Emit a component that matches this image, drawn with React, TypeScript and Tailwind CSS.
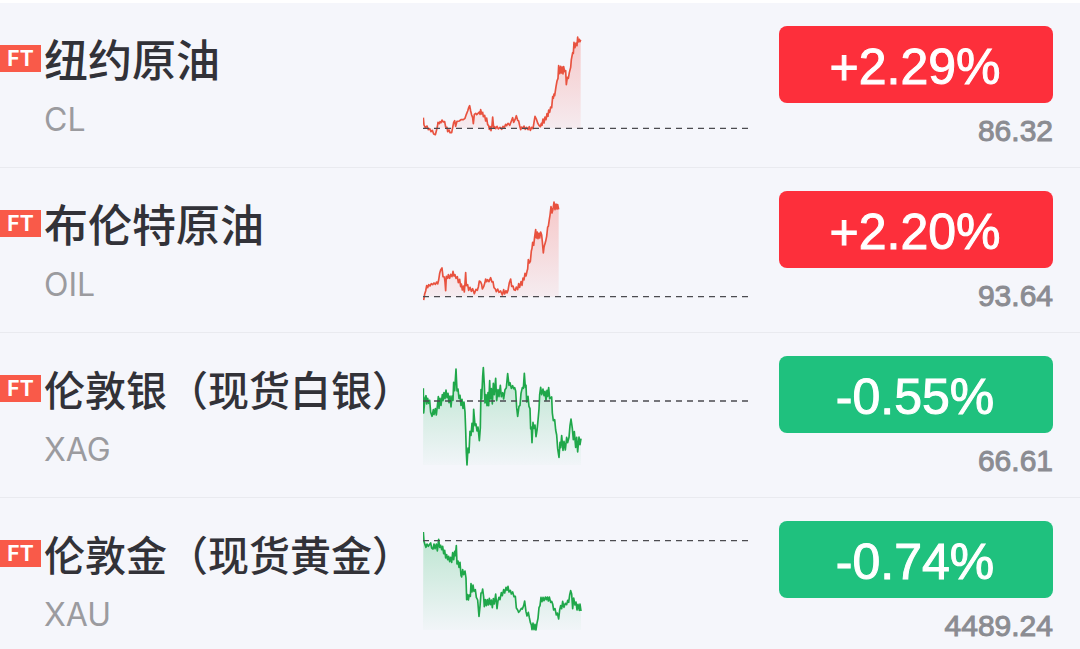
import React from 'react';
import { clsx } from 'clsx';

interface Quote {
  name: string;
  code: string;
  change: string;
  price: string;
  up: boolean;
  // y of the previous close, in chart units
  base: number;
  points: string;
}

const QUOTES: Quote[] = [
  {
    name: '纽约原油',
    code: 'CL',
    change: '+2.29%',
    price: '86.32',
    up: true,
    base: 310,
    points:
      '40,278 42,300 46,308 51,303 55,314 59,311 63,320 67,316 71,327 76,329 79,318 82,306 84,292 88,296 90,290 93,293 96,285 100,291 104,290 107,306 111,307 113,320 117,315 120,323 125,323 128,308 131,292 134,287 137,304 141,289 148,288 153,284 160,284 165,280 169,268 173,258 176,248 179,242 182,258 185,270 188,278 190,296 193,268 197,265 200,269 204,265 208,261 210,268 212,254 215,267 218,262 220,275 224,271 227,288 230,279 233,299 236,302 238,313 241,305 243,317 246,301 248,276 251,309 254,305 257,311 261,304 265,312 270,307 275,313 279,304 283,307 287,298 290,302 294,295 299,301 303,291 308,278 311,292 315,284 319,272 323,286 326,288 329,302 332,314 335,306 339,310 342,303 346,313 350,307 354,314 358,305 361,316 365,307 369,311 372,292 375,274 379,282 383,294 387,301 391,305 394,295 396,301 399,282 402,294 405,276 408,284 411,266 414,274 416,255 419,262 422,246 425,248 428,215 430,220 432,207 434,212 438,185 441,168 444,160 446,122 449,146 452,124 454,144 457,126 459,147 461,125 464,140 467,137 469,179 472,157 475,160 478,143 482,127 484,104 488,83 490,85 492,52 495,68 498,54 501,62 503,36 505,51 508,43 510,50 512,44',
  },
  {
    name: '布伦特原油',
    code: 'OIL',
    change: '+2.20%',
    price: '93.64',
    up: true,
    base: 320,
    points:
      '41,330 44,312 47,303 50,287 53,293 56,284 60,288 64,281 68,284 72,279 76,283 80,276 83,282 86,270 89,250 92,240 96,234 99,260 103,261 105,276 107,302 109,259 113,265 115,254 119,265 122,253 126,260 129,244 132,258 135,254 138,265 142,260 145,278 149,268 152,290 154,282 157,300 160,288 163,306 165,279 167,248 169,287 173,284 176,301 180,292 184,304 188,296 193,311 198,298 202,301 205,291 208,273 212,276 215,283 217,297 221,290 225,277 227,267 230,275 233,269 237,275 242,263 246,276 249,275 252,293 256,297 259,305 263,297 267,307 272,303 277,315 281,299 284,312 288,302 291,309 294,301 298,278 302,267 305,289 309,288 312,299 316,301 319,291 323,299 326,281 329,292 333,275 336,286 339,264 342,270 345,250 348,258 351,244 353,237 355,209 358,219 361,214 364,183 366,175 368,157 371,166 374,140 377,119 379,144 382,126 384,146 387,130 389,144 392,126 395,135 397,155 400,189 402,172 404,164 407,154 410,139 413,111 415,109 418,88 420,76 423,50 426,69 429,57 432,36 435,59 438,42 441,57 443,44 446,58',
  },
  {
    name: '伦敦银（现货白银）',
    code: 'XAG',
    change: '-0.55%',
    price: '66.61',
    up: false,
    base: 138,
    points:
      '40,100 41,174 45,130 48,122 50,147 53,130 56,145 59,136 62,172 66,184 70,164 72,179 76,161 79,180 82,153 85,125 87,160 90,130 93,151 97,119 99,137 102,113 105,131 108,105 111,128 114,115 117,143 120,123 123,156 126,123 129,136 131,82 134,107 138,42 141,108 144,102 147,130 150,121 153,151 156,133 159,160 162,141 165,171 167,225 169,294 171,330 174,279 177,293 180,229 183,241 186,205 189,230 191,163 195,212 198,207 201,228 204,216 208,257 211,218 213,104 215,132 218,64 220,38 223,91 225,144 228,119 231,152 234,113 236,152 239,77 241,132 244,101 247,147 250,85 253,119 257,70 260,137 264,104 267,125 271,91 274,125 278,113 281,132 285,104 289,98 293,56 297,91 300,83 304,100 308,92 311,101 314,98 317,108 320,158 323,184 327,154 330,151 333,115 337,98 340,100 343,55 346,97 348,91 350,141 354,124 357,154 360,161 362,222 364,216 366,263 369,202 372,220 375,210 378,245 381,226 384,196 387,162 389,119 392,97 395,119 399,102 402,122 405,109 408,136 411,106 413,124 416,98 419,131 422,128 425,126 427,174 430,197 434,194 437,225 440,240 443,281 447,307 450,262 452,278 455,242 459,286 462,259 466,285 470,247 473,263 477,247 480,212 483,192 487,220 490,254 493,230 497,277 500,247 503,291 507,246 510,269 513,251',
  },
  {
    name: '伦敦金（现货黄金）',
    code: 'XAU',
    change: '-0.74%',
    price: '4489.24',
    up: false,
    base: 62,
    points:
      '40,36 42,64 45,74 48,82 51,72 55,79 59,73 62,69 65,84 69,87 72,72 75,86 79,72 82,93 86,58 89,82 92,76 95,89 98,79 101,101 104,91 107,114 110,104 113,119 116,109 119,125 122,112 125,127 128,98 131,119 134,94 136,107 139,77 141,132 144,123 147,142 150,127 153,166 155,171 158,149 161,164 165,153 168,174 170,239 173,224 175,240 178,225 181,229 183,191 186,216 189,195 192,214 196,209 199,232 203,240 207,289 210,259 213,219 216,218 218,207 221,231 223,260 226,239 229,257 232,239 235,255 238,235 241,254 244,240 247,263 250,236 253,252 257,222 261,266 264,242 267,232 270,239 274,218 277,227 281,209 284,219 288,202 291,211 294,199 297,216 301,211 304,222 308,216 312,230 316,229 319,264 323,270 326,277 330,272 334,265 337,267 341,257 344,243 348,275 351,288 355,277 358,293 361,307 364,315 366,329 369,309 372,329 375,313 378,330 381,309 384,295 387,263 390,257 393,232 396,245 399,232 402,242 406,231 409,239 412,231 415,243 418,231 422,247 425,244 428,252 431,270 435,266 439,285 442,279 446,297 449,270 452,257 455,266 458,244 462,262 466,250 470,254 473,241 476,247 479,225 482,212 485,222 488,266 491,234 495,255 498,246 501,270 504,253 508,271 510,252 513,273',
  },
];

const CHART_LEFT = 39;
const CHART_BOTTOM = 330;

const Sparkline: React.FC<{ quote: Quote }> = ({ quote }) => {
  const { points, base, up, code } = quote;
  const lastX = points.slice(points.lastIndexOf(' ') + 1).split(',')[0];
  const floor = up ? base : CHART_BOTTOM;
  const color = up ? '#e8523f' : '#1fa74a';
  const fill = up ? '#f8655c' : '#3fc072';

  return (
    <svg viewBox="39 18 975 330" className="mt-7 w-full" aria-hidden="true">
      <defs>
        <linearGradient id={`fill-${code}`} x1="0" y1="0" x2="0" y2="1">
          <stop offset="0" stopColor={fill} stopOpacity="0.32" />
          <stop offset="1" stopColor={fill} stopOpacity={up ? 0.06 : 0.02} />
        </linearGradient>
      </defs>
      <polygon points={`${CHART_LEFT},${floor} ${points} ${lastX},${floor}`} fill={`url(#fill-${code})`} />
      <polyline points={points} fill="none" stroke={color} strokeWidth="5" strokeLinejoin="round" />
      <line x1={CHART_LEFT} y1={base} x2="1014" y2={base} stroke="#4b4b50" strokeWidth="4" strokeDasharray="18 15" />
    </svg>
  );
};

const QuoteRow: React.FC<{ quote: Quote }> = ({ quote }) => {
  const { name, code, change, price, up } = quote;

  return (
    <li className="grid h-[165px] grid-cols-[minmax(0,1fr)_325px_305px] border-b border-[#e9eaef] pr-[27px]">
      <div className="pt-[23px]">
        <div className="flex h-16 items-center gap-[3px]">
          <span className="flex h-[27px] w-[41px] shrink-0 items-center justify-center bg-[#f95a49] pt-0.5 font-['Inter',sans-serif] text-[21px] font-bold text-white">
            FT
          </span>
          <h2
            className={clsx(
              "whitespace-nowrap font-['Noto_Sans_CJK_SC',sans-serif] font-medium leading-none text-[#323238]",
              name.length > 5 ? 'text-[41px]' : 'text-[44px]',
            )}
          >
            {name}
          </h2>
        </div>
        <p className="ml-11 mt-2.5 font-['Inter',sans-serif] text-[32px] leading-10 text-[#9b9b9f]">{code}</p>
      </div>
      <Sparkline quote={quote} />
      <div className="pl-[31px] pt-[23px] font-['Liberation_Sans',sans-serif]">
        <div
          className={clsx(
            'flex h-[77px] items-center justify-center rounded-lg pt-1.5 pr-0.5 text-[50px] text-white [-webkit-text-stroke:1px_white]',
            up ? 'bg-[#fd2f3b]' : 'bg-[#1fc17e]',
          )}
        >
          {change}
        </div>
        <p className="mt-2 text-right text-[30px] leading-10 text-[#8b8c92] [-webkit-text-stroke:1px_#8b8c92]">{price}</p>
      </div>
    </li>
  );
};

export default function App() {
  return (
    <main className="h-screen overflow-hidden border-t-3 border-white bg-[#f5f6fb]">
      <ul>
        {QUOTES.map((quote) => (
          <QuoteRow key={quote.code} quote={quote} />
        ))}
      </ul>
    </main>
  );
}
